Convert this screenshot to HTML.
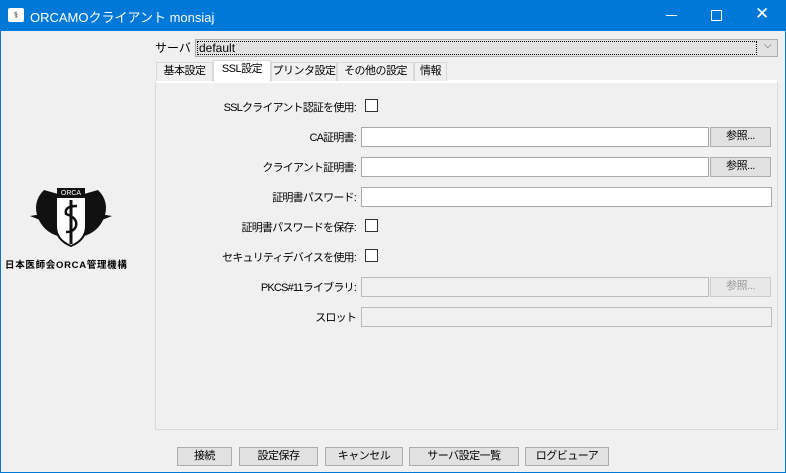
<!DOCTYPE html>
<html><head><meta charset="utf-8"><style>
*{box-sizing:border-box;margin:0;padding:0}
body{width:786px;height:473px;overflow:hidden;background:#0078d7;font-family:"Liberation Sans","Noto Sans CJK JP",sans-serif;font-size:12px;color:#000;position:relative}
.a{position:absolute;white-space:nowrap}
.win{left:1px;top:31px;width:784px;height:441px;background:#f0f0f0}
.fld{position:absolute;left:361px;height:20px;background:#fff;border:1px solid #a9a9a9}
.btn{position:absolute;background:#e1e1e1;border:1px solid #adadad;text-align:center;line-height:17px;font-size:11px;white-space:nowrap;letter-spacing:-0.5px}
.lbl{position:absolute;right:430px;font-size:11px;letter-spacing:-0.8px;white-space:nowrap}
.cb{position:absolute;left:365px;width:13px;height:13px;border:1px solid #333;background:#fff}
.tab{position:absolute;top:62px;height:19px;border:1px solid #d9d9d9;border-bottom:none;background:#f0f0f0;font-size:11px;line-height:17px;text-align:center;white-space:nowrap;letter-spacing:-0.5px}
</style></head><body>
<div class="a" style="left:8px;top:8px;width:16px;height:14px;background:#fff;border-radius:2px;font-size:9px;text-align:center;line-height:14px">⚕</div>
<div class="a" style="left:30px;top:7px;color:#fff;font-size:13px">ORCAMOクライアント monsiaj</div>
<div class="a" style="left:666px;top:15px;width:11px;height:1px;background:#fff"></div>
<div class="a" style="left:711px;top:10px;width:11px;height:11px;border:1px solid #fff"></div>
<div class="a" style="left:755px;top:4px;color:#fff;font-size:17px;font-family:'DejaVu Sans'">✕</div>
<div class="a win"></div>
<svg class="a" style="left:30px;top:188px" width="82" height="60" viewBox="0 0 82 60">
<path d="M14 2 Q2 14 8 30 Q14 44 28 48 L28 6 Z" fill="#111"/>
<path d="M68 2 Q80 14 74 30 Q68 44 54 48 L54 6 Z" fill="#111"/>
<path d="M0 28 L12 26 L10 32Z M82 28 L70 26 L72 32Z" fill="#111"/>
<rect x="27" y="0" width="28" height="8" fill="#111"/>
<text x="41" y="7" font-size="7" fill="#fff" text-anchor="middle" font-family="Liberation Sans">ORCA</text>
<path d="M26 9 L56 9 L56 38 Q56 52 41 58 Q26 52 26 38 Z" fill="#fff" stroke="#111" stroke-width="2"/>
<rect x="39.5" y="12" width="3" height="44" fill="#111"/>
<path d="M47 18 Q34 18 36 26 Q48 30 46 38 Q44 44 36 44" fill="none" stroke="#111" stroke-width="2.5"/>
</svg>
<div class="a" style="left:5px;top:257px;font-size:9.5px;font-weight:bold;letter-spacing:0.7px">日本医師会ORCA管理機構</div>
<div class="a" style="left:155px;top:39px;font-size:12px">サーバ</div>
<div class="a" style="left:195px;top:39px;width:583px;height:18px;background:#e1e1e1;border:1px solid #adadad"></div>
<div class="a" style="left:197px;top:41px;width:560px;height:14px;border:1px dotted #000;line-height:12px;padding-left:1px">default</div>
<div class="a" style="left:764px;top:40px;color:#555;font-size:10px">⌵</div>
<div class="a" style="left:155px;top:80px;width:623px;height:350px;border:1px solid #d9d9d9;border-top:3px solid #fff"></div>
<div class="tab" style="left:156px;width:57px">基本設定</div>
<div class="tab" style="left:213px;width:58px;top:60px;height:22px;background:#fff;z-index:2">SSL設定</div>
<div class="tab" style="left:271px;width:66px">プリンタ設定</div>
<div class="tab" style="left:337px;width:77px">その他の設定</div>
<div class="tab" style="left:414px;width:33px">情報</div>
<div class="lbl" style="top:99px">SSLクライアント認証を使用:</div><div class="cb" style="top:99px"></div>
<div class="lbl" style="top:129px">CA証明書:</div><div class="fld" style="top:127px;width:348px"></div><div class="btn" style="left:710px;top:127px;width:61px;height:20px">参照...</div>
<div class="lbl" style="top:159px">クライアント証明書:</div><div class="fld" style="top:157px;width:348px"></div><div class="btn" style="left:710px;top:157px;width:61px;height:20px">参照...</div>
<div class="lbl" style="top:189px">証明書パスワード:</div><div class="fld" style="top:187px;width:411px"></div>
<div class="lbl" style="top:219px">証明書パスワードを保存:</div><div class="cb" style="top:219px"></div>
<div class="lbl" style="top:249px">セキュリティデバイスを使用:</div><div class="cb" style="top:249px"></div>
<div class="lbl" style="top:279px">PKCS#11ライブラリ:</div><div class="fld" style="top:277px;width:348px;background:#f0f0f0;border-color:#bbb"></div><div class="btn" style="left:710px;top:277px;width:61px;height:20px;color:#999;background:#e8e8e8;border-color:#ccc">参照...</div>
<div class="lbl" style="top:309px">スロット</div><div class="fld" style="top:307px;width:411px;background:#f0f0f0;border-color:#bbb"></div>
<div class="btn" style="left:177px;top:447px;width:55px;height:19px">接続</div>
<div class="btn" style="left:239px;top:447px;width:79px;height:19px">設定保存</div>
<div class="btn" style="left:325px;top:447px;width:78px;height:19px">キャンセル</div>
<div class="btn" style="left:409px;top:447px;width:110px;height:19px">サーバ設定一覧</div>
<div class="btn" style="left:525px;top:447px;width:84px;height:19px">ログビューア</div>
</body></html>
